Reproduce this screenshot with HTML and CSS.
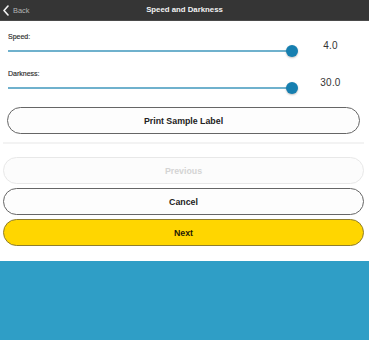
FILE: index.html
```html
<!DOCTYPE html>
<html>
<head>
<meta charset="utf-8">
<link rel="stylesheet" href="styles.css">
</head>
<body>
<div class="screen">
  <header class="topbar">
    <div class="back">
      <svg class="chev" width="6" height="11" viewBox="0 0 6 11"><path d="M5 1 L1 5.5 L5 10" fill="none" stroke="#f2f2f2" stroke-width="1.6" stroke-linecap="round" stroke-linejoin="round"/></svg>
      <span>Back</span>
    </div>
    <div class="title">Speed and Darkness</div>
  </header>

  <section class="settings">
    <div class="field">
      <div class="label">Speed:</div>
      <div class="slider-row">
        <div class="track-wrap">
          <div class="track"></div>
          <div class="thumb"></div>
        </div>
        <div class="value">4.0</div>
      </div>
    </div>
    <div class="field">
      <div class="label">Darkness:</div>
      <div class="slider-row">
        <div class="track-wrap">
          <div class="track"></div>
          <div class="thumb"></div>
        </div>
        <div class="value">30.0</div>
      </div>
    </div>
    <button class="btn btn-outline print">Print Sample Label</button>
  </section>

  <div class="separator"></div>

  <section class="actions">
    <button class="btn btn-disabled">Previous</button>
    <button class="btn btn-outline">Cancel</button>
    <button class="btn btn-primary">Next</button>
  </section>

  <div class="footer-band"></div>
</div>
</body>
</html>
```

FILE: styles.css
```css
* { box-sizing: border-box; }

html, body {
  margin: 0;
  padding: 0;
  background: #ffffff;
}

body {
  font-family: "Liberation Sans", Arial, sans-serif;
  color: #222;
}

.screen {
  width: 369px;
  height: 340px;
  display: flex;
  flex-direction: column;
  overflow: hidden;
}

.topbar {
  height: 21px;
  background: #353535;
  border-bottom: 1px solid #4a4a4a;
  display: flex;
  align-items: center;
  position: relative;
  flex: none;
}

.back {
  display: flex;
  align-items: center;
  gap: 4px;
  padding-left: 3px;
  color: #b4b4b4;
  font-size: 7.4px;
  height: 100%;
}

.chev { display: block; }

.title {
  position: absolute;
  left: 0;
  right: 0;
  top: 0;
  height: 20px;
  line-height: 20px;
  text-align: center;
  color: #f2f2f2;
  font-weight: bold;
  font-size: 7.8px;
  pointer-events: none;
}

.settings {
  padding: 0 9px 0 7px;
  display: flex;
  flex-direction: column;
}

.field {
  margin-top: 11px;
}

.field + .field {
  margin-top: 12px;
}

.label {
  margin-left: 1px;
  font-size: 7px;
  line-height: 10px;
  height: 10px;
  color: #2a2a2a;
  -webkit-text-stroke: 0.15px #2a2a2a;
}

.slider-row {
  display: flex;
  align-items: center;
  height: 12px;
  margin-top: 3px;
}

.track-wrap {
  width: 291px;
  height: 12px;
  position: relative;
  flex: none;
}

.track {
  position: absolute;
  left: 1px;
  right: 6px;
  top: 5px;
  height: 2px;
  background: #6fb1cd;
}

.thumb {
  position: absolute;
  right: 0;
  top: 0;
  width: 12px;
  height: 12px;
  border-radius: 50%;
  background: #167fb0;
  box-shadow: 0 1px 2px rgba(0, 0, 0, 0.25);
}

.value {
  flex: 1;
  align-self: flex-start;
  margin-top: -4px;
  padding-left: 3px;
  text-align: center;
  font-size: 10px;
  line-height: 10px;
  color: #333;
  letter-spacing: 0.2px;
}

.btn {
  display: block;
  width: 100%;
  height: 27px;
  border-radius: 14px;
  font-family: "Liberation Sans", Arial, sans-serif;
  font-weight: bold;
  font-size: 8.8px;
  padding: 0;
  margin: 0;
  color: #222;
  background: #fdfdfd;
}

.btn-outline {
  border: 1px solid #666;
}

.print {
  margin-top: 13px;
}

.separator {
  height: 2px;
  margin: 8px 5px 0 3px;
  background: #f3f3f3;
  flex: none;
}

.actions {
  padding: 0 5px 0 3px;
  margin-top: 13px;
  display: flex;
  flex-direction: column;
  gap: 4px;
}

.btn-disabled {
  border: 1px solid #e8e8e8;
  color: #d4d4d4;
  background: #fcfcfc;
}

.btn-primary {
  background: #ffd600;
  border: 1px solid #8f7e2c;
  color: #1e1a05;
}

.footer-band {
  margin-top: 15px;
  flex: 1;
  background: #2f9ec6;
}
```
